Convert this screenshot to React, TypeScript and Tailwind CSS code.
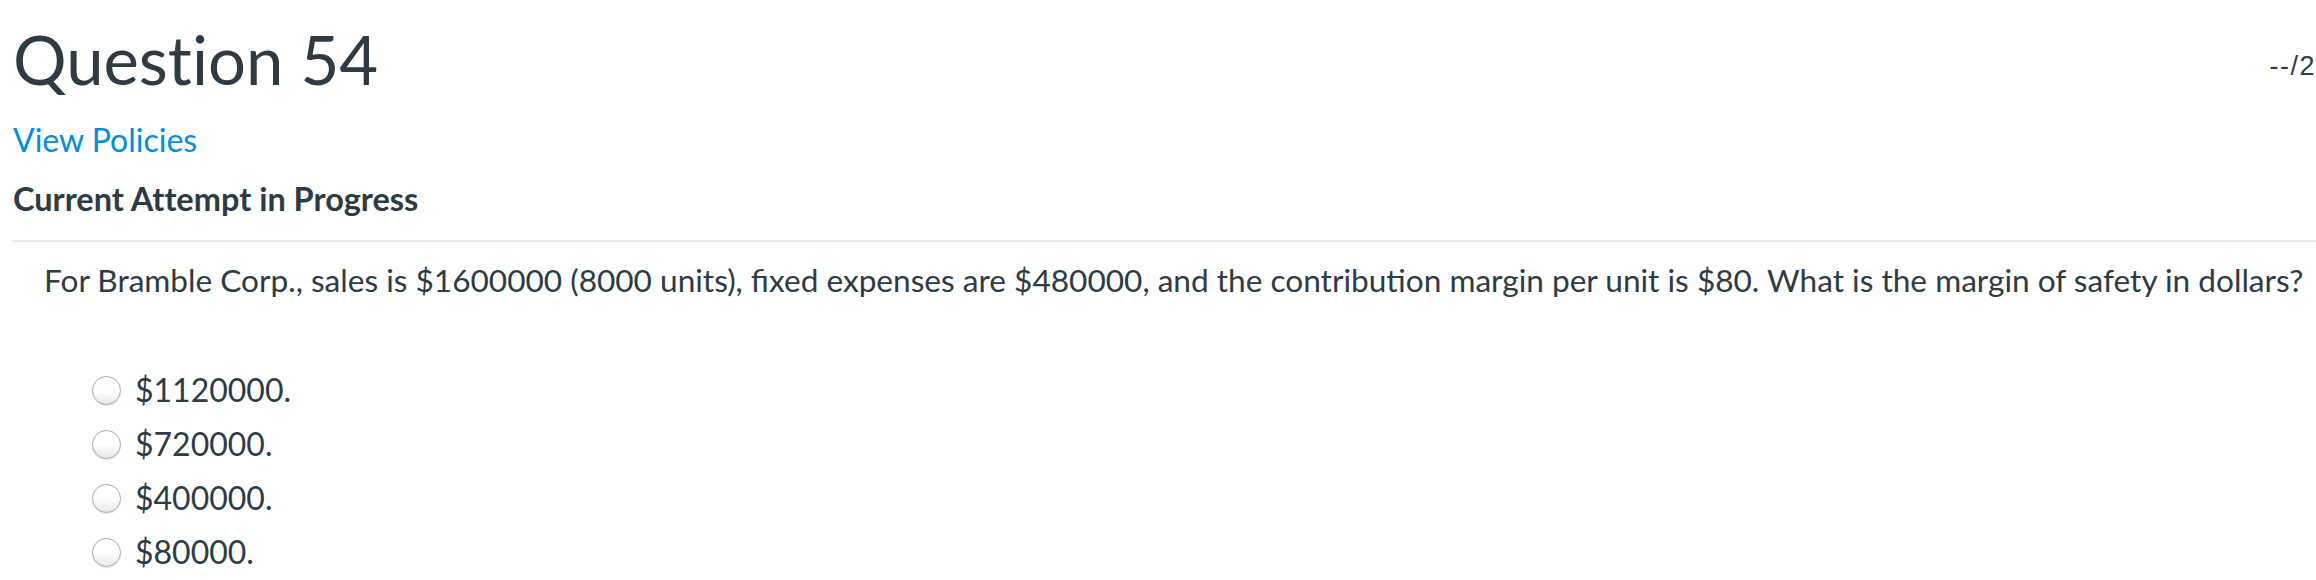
import React from 'react';

const options = ['$1120000.', '$720000.', '$400000.', '$80000.'];

function Radio() {
  return (
    <span className="inline-block w-[29px] h-[29px] rounded-full border border-[#aaaaaa] bg-gradient-to-b from-white via-white to-[#e8e8e8] shadow-[0_1px_1px_rgba(0,0,0,0.12)]" />
  );
}

export default function App() {
  return (
    <div className="w-[2316px] h-[580px] overflow-hidden bg-white text-[#2d3b45] font-['Lato','Noto_Sans',sans-serif]">
      <div className="flex items-start justify-between pl-[13px]">
        <h1 className="mt-[26px] text-[67px] leading-none font-normal [font-variant-ligatures:no-common-ligatures]">
          Question 54
        </h1>
        <div className="mt-[53px] text-[27px] leading-none tracking-[1.5px] font-['Liberation_Sans',Arial,sans-serif]">
          --/2
        </div>
      </div>
      <div className="pl-[13px]">
        <a className="block mt-[31px] text-[32px] leading-none text-[#008ee2]">View Policies</a>
        <div className="mt-[27px] text-[32.5px] leading-none font-bold [font-variant-ligatures:no-common-ligatures]">
          Current Attempt in Progress
        </div>
      </div>
      <div className="ml-[12px] mt-[24px] h-[2px] bg-[#ebebeb]" />
      <div className="pl-[44px] mt-[23px]">
        <p className="text-[31.6px] leading-none whitespace-nowrap">
          For Bramble Corp., sales is $1600000 (8000 units), fixed expenses are $480000, and the contribution margin per unit is $80. What is the margin of safety in dollars?
        </p>
        <ul className="mt-[67px] pl-[48px]">
          {options.map((opt) => (
            <li key={opt} className="flex items-center h-[54px] text-[32px]">
              <Radio />
              <span className="ml-[14px]">{opt}</span>
            </li>
          ))}
        </ul>
      </div>
    </div>
  );
}
